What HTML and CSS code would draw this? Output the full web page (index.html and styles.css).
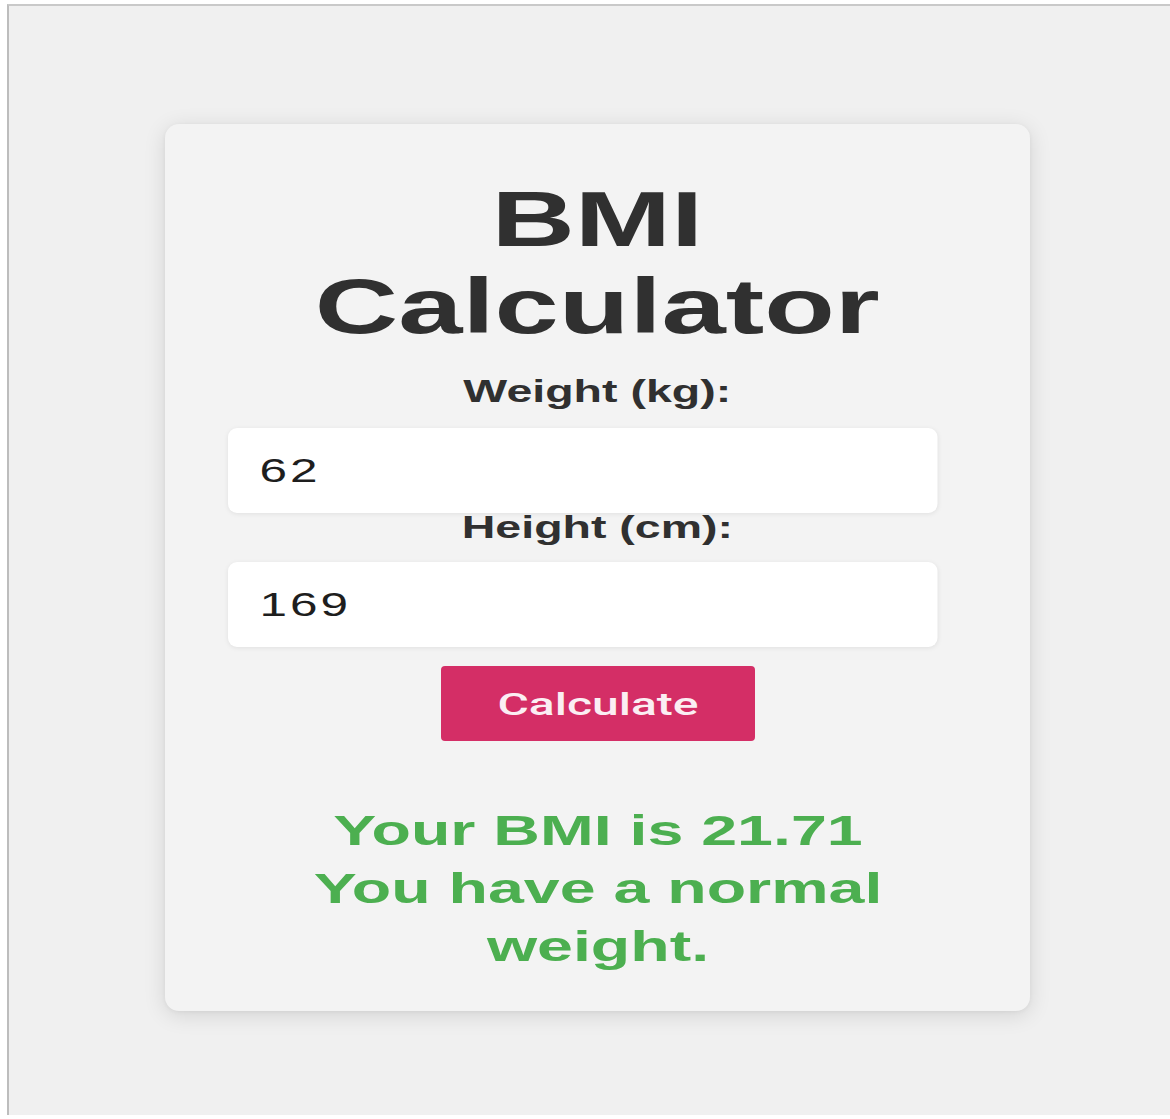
FILE: index.html
```html
<!DOCTYPE html>
<html lang="en">
<head>
<meta charset="utf-8">
<title>BMI Calculator</title>
<link rel="stylesheet" href="styles.css">
</head>
<body>
<div class="screen">
  <div class="card">
    <h1 class="title">BMI<br>Calculator</h1>
    <label class="label" for="weight">Weight (kg):</label>
    <input class="field" id="weight" type="text" value="62">
    <label class="label" for="height">Height (cm):</label>
    <input class="field" id="height" type="text" value="169">
    <button class="btn"><span class="btn-text">Calculate</span></button>
    <p class="result">Your BMI is 21.71<br>You have a normal weight.</p>
  </div>
</div>
</body>
</html>
```
FILE: styles.css
```css
html, body {
  margin: 0;
  padding: 0;
  background: #ffffff;
}

.screen {
  box-sizing: border-box;
  margin: 4px 0 0 7px;
  height: 1111px;
  border-top: 2px solid #c9c9c9;
  border-left: 2px solid #bdbdbd;
  background: #f0f0f0;
  padding: 118px 0 0 156px;
}

.card {
  box-sizing: border-box;
  width: 865px;
  background: #f3f3f3;
  border-radius: 14px;
  box-shadow: 0 4px 22px rgba(0, 0, 0, 0.12), 0 1px 4px rgba(0, 0, 0, 0.05);
  padding: 52px 0 36px;
  display: flex;
  flex-direction: column;
  align-items: center;
  font-family: "Liberation Sans", Arial, sans-serif;
}

.title {
  margin: 0;
  font-size: 77px;
  line-height: 87px;
  font-weight: bold;
  color: #303030;
  text-align: center;
  transform: scaleX(1.5);
}

.label {
  display: block;
  font-size: 31px;
  line-height: 30px;
  font-weight: bold;
  color: #303030;
  text-align: center;
  margin-bottom: 19px;
  transform: scaleX(1.5);
}

.title + .label {
  margin-top: 27px;
  margin-bottom: 21px;
}

.field {
  box-sizing: border-box;
  align-self: flex-start;
  margin: 0 0 0 63px;
  width: 473px;
  height: 85px;
  border: none;
  outline: none;
  border-radius: 6px / 9px;
  background: #ffffff;
  box-shadow: 0 1px 4px rgba(0, 0, 0, 0.08);
  padding: 0 0 0 21px;
  font-family: "Liberation Sans", Arial, sans-serif;
  font-size: 33px;
  letter-spacing: 2px;
  color: #1e1e1e;
  transform: scaleX(1.5);
  transform-origin: left center;
}

.btn {
  margin-top: 19px;
  width: 314px;
  height: 75px;
  border: none;
  border-radius: 4px;
  background: #d42e66;
  display: flex;
  align-items: center;
  justify-content: center;
  padding: 0;
}

.btn-text {
  display: inline-block;
  font-family: Roboto, "Liberation Sans", sans-serif;
  font-weight: 500;
  font-size: 32px;
  color: #fbeef3;
  transform: scaleX(1.5);
}

.result {
  margin: 60px 0 0;
  width: 420px;
  font-size: 43px;
  line-height: 58px;
  font-weight: bold;
  color: #4caf50;
  text-align: center;
  transform: scaleX(1.5);
}
```
